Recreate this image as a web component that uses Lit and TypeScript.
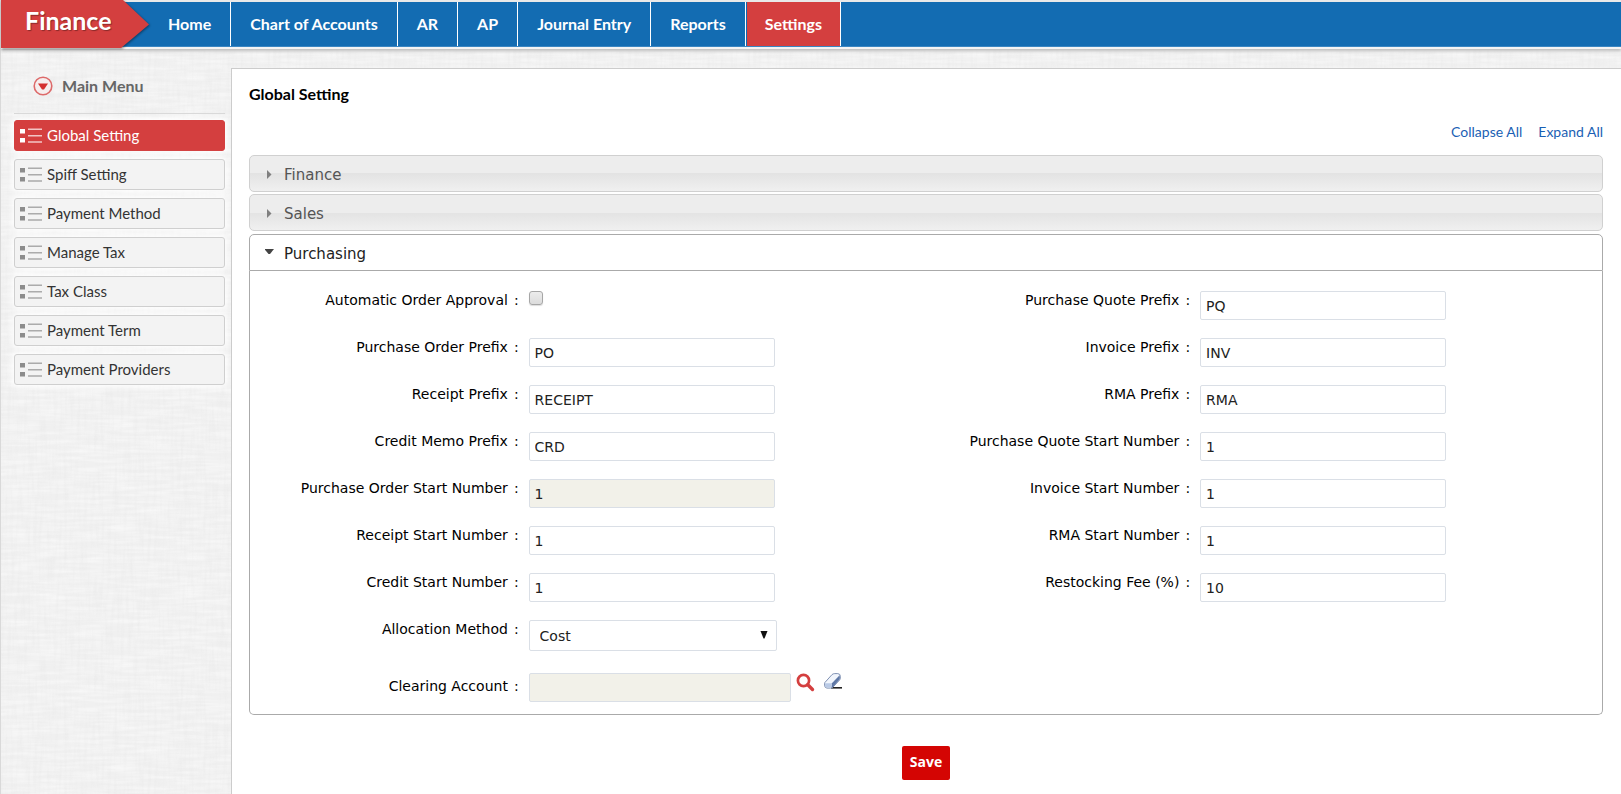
import { LitElement, html, css, svg, nothing } from "lit";
import { customElement, property, state } from "lit/decorators.js";
import { classMap } from "lit/directives/class-map.js";

interface Field {
  id: string;
  label: string;
  kind: "text" | "check" | "select" | "lookup";
  value?: string;
  locked?: boolean;
}

const NAV = ["Home", "Chart of Accounts", "AR", "AP", "Journal Entry", "Reports", "Settings"];

const MENU = [
  "Global Setting",
  "Spiff Setting",
  "Payment Method",
  "Manage Tax",
  "Tax Class",
  "Payment Term",
  "Payment Providers",
];

const LEFT: Field[] = [
  { id: "auto-approval", label: "Automatic Order Approval", kind: "check" },
  { id: "po-prefix", label: "Purchase Order Prefix", kind: "text", value: "PO" },
  { id: "receipt-prefix", label: "Receipt Prefix", kind: "text", value: "RECEIPT" },
  { id: "credit-prefix", label: "Credit Memo Prefix", kind: "text", value: "CRD" },
  { id: "po-start", label: "Purchase Order Start Number", kind: "text", value: "1", locked: true },
  { id: "receipt-start", label: "Receipt Start Number", kind: "text", value: "1" },
  { id: "credit-start", label: "Credit Start Number", kind: "text", value: "1" },
  { id: "allocation", label: "Allocation Method", kind: "select", value: "Cost" },
  { id: "clearing", label: "Clearing Account", kind: "lookup", value: "" },
];

const RIGHT: Field[] = [
  { id: "pq-prefix", label: "Purchase Quote Prefix", kind: "text", value: "PQ" },
  { id: "inv-prefix", label: "Invoice Prefix", kind: "text", value: "INV" },
  { id: "rma-prefix", label: "RMA Prefix", kind: "text", value: "RMA" },
  { id: "pq-start", label: "Purchase Quote Start Number", kind: "text", value: "1" },
  { id: "inv-start", label: "Invoice Start Number", kind: "text", value: "1" },
  { id: "rma-start", label: "RMA Start Number", kind: "text", value: "1" },
  { id: "restocking", label: "Restocking Fee (%)", kind: "text", value: "10" },
];

@customElement("setting-field")
class SettingField extends LitElement {
  @property({ attribute: false }) field!: Field;

  static styles = css`
    :host {
      display: block;
    }
    .row {
      display: grid;
      grid-template-columns: 2fr 3fr;
      column-gap: 10px;
      align-items: start;
      min-height: 29px;
    }
    .row.lookup {
      align-items: center;
    }
    .label {
      font-size: 14px;
      line-height: 18px;
      text-align: right;
      white-space: nowrap;
      color: #000;
    }
    .lookup .label {
      padding-bottom: 3px;
    }
    .colon {
      margin-left: 6px;
    }
    .text,
    .select {
      box-sizing: border-box;
      width: 246px;
      max-width: 100%;
      height: 29px;
      margin: 0;
      padding: 0 5px;
      border: 1px solid #dadfe6;
      border-radius: 2px;
      background: #fff;
      font-family: inherit;
      font-size: 14px;
      color: #222;
      display: block;
    }
    .text.locked {
      background: #f2f1e9;
    }
    .lookup .text {
      width: 262px;
    }
    .select-box {
      position: relative;
      width: 248px;
    }
    .select {
      appearance: none;
      width: 100%;
      height: 31px;
      padding: 0 10px;
    }
    .arrow {
      position: absolute;
      right: 9px;
      top: 11px;
      width: 8px;
      height: 8px;
      pointer-events: none;
    }
    .check {
      appearance: none;
      box-sizing: border-box;
      display: block;
      width: 14px;
      height: 14px;
      margin: 0;
      border: 1px solid #a6a6a6;
      border-radius: 3px;
      background: linear-gradient(#ececec, #dcdcdc);
      box-shadow: 0 1px 1px #ddd;
    }
    .with-icons {
      display: flex;
      align-items: flex-start;
    }
    .icon {
      border: 0;
      padding: 0;
      background: none;
      cursor: pointer;
      display: block;
      height: 18px;
    }
    .find {
      margin-left: 5px;
    }
    .erase {
      margin-left: 9px;
    }
    .glyph {
      display: block;
    }
  `;

  private control() {
    const f = this.field;
    if (f.kind === "check") return html`<input class="check" type="checkbox" id=${f.id} />`;
    if (f.kind === "select")
      return html`<div class="select-box">
        <select class="select" id=${f.id}>
          <option selected>Cost</option>
        </select>
        <svg class="arrow" viewBox="0 0 8 8"><path d="M.5 0h7L4.500 7.500h-1z" fill="#111" /></svg>
      </div>`;
    const box = html`<input
      class=${classMap({ text: true, locked: !!f.locked || f.kind === "lookup" })}
      type="text"
      id=${f.id}
      .value=${f.value ?? ""}
      ?readonly=${f.locked || f.kind === "lookup"}
    />`;
    if (f.kind !== "lookup") return box;
    return html`<div class="with-icons">
      ${box}
      <button class="icon find" type="button" aria-label="Find account">
        <svg class="glyph" width="19" height="19" viewBox="0 0 19 19" fill="none" stroke="#d43f3f">
          <circle cx="7.500" cy="7.500" r="5.600" stroke-width="2.700" />
          <path d="M11.800 11.800l4.700 4.700" stroke-width="3.400" stroke-linecap="round" />
        </svg>
      </button>
      <button class="icon erase" type="button" aria-label="Clear account">
        <svg class="glyph" width="18" height="18" viewBox="0 0 18 18">
          <path d="M7 14.800h11" stroke="#222" stroke-width="1.600" />
          <path d="M.8 9.600 8 1.600Q9.200.6 10.800.6h3q2.600.3 2.500 2.600v1.900q0 1-.8 2L9 14q-1 1.100-2.500 1.100H2.900Q.7 14.800.5 12.200z" fill="#f1f5fc" stroke="#7f90b2" />
          <path d="M7.900 10.300 15.600 2.200l.3 2.800q0 1-.8 2l-6 6.800q-.9.900-1.700.9z" fill="#5f78a6" />
          <path d="M1.200 10.200h5.300q1.500.1 1.300 1.700l-.6 2.600H3q-1.700-.1-2-2.300z" fill="#b9cae6" />
        </svg>
      </button>
    </div>`;
  }

  render() {
    const f = this.field;
    return html`<div class=${classMap({ row: true, lookup: f.kind === "lookup" })}>
      <label class="label" for=${f.id}>${f.label}<span class="colon">:</span></label>
      ${this.control()}
    </div>`;
  }
}

@customElement("app-root")
class AppRoot extends LitElement {
  @state() private open = new Set<string>(["Purchasing"]);

  static styles = css`
    :host {
      display: flex;
      flex-direction: column;
      box-sizing: border-box;
      min-height: 100vh;
      font-family: Lato, sans-serif;
      border-left: 1px solid #d9d9d9;
      background-color: #f0f0f0;
      background-image: url("data:image/svg+xml,%3Csvg xmlns='http://www.w3.org/2000/svg' width='240' height='240'%3E%3Cfilter id='a' x='0' y='0' width='100%25' height='100%25'%3E%3CfeTurbulence type='fractalNoise' baseFrequency='.03 .3' numOctaves='2' stitchTiles='stitch'/%3E%3CfeColorMatrix values='0 0 0 0 1 0 0 0 0 1 0 0 0 0 1 1 0 0 0 -.35'/%3E%3C/filter%3E%3Cfilter id='b' x='0' y='0' width='100%25' height='100%25'%3E%3CfeTurbulence type='fractalNoise' baseFrequency='.3 .03' numOctaves='2' stitchTiles='stitch'/%3E%3CfeColorMatrix values='0 0 0 0 .75 0 0 0 0 .75 0 0 0 0 .75 .5 0 0 0 -.2'/%3E%3C/filter%3E%3Crect width='240' height='240' filter='url(%23a)'/%3E%3Crect width='240' height='240' filter='url(%23b)'/%3E%3C/svg%3E");
    }
    .header {
      display: flex;
      height: 49px;
      background: linear-gradient(#e9e9e9 2px, #136cb2 2px, #136cb2 46px, #3a86c2 46px, #3a86c2 47px, #f4f4f4 47px);
      box-shadow: 0 2px 3px #bdbdbd;
    }
    .brand {
      position: relative;
      width: 148px;
      flex: none;
      box-sizing: border-box;
      padding-left: 24px;
      margin: 0;
      font-size: 25px;
      font-weight: 700;
      line-height: 40px;
      color: #fff;
      text-shadow: 1px 1px 1px rgba(0, 0, 0, 0.35);
    }
    .flag {
      position: absolute;
      left: 0;
      top: 0;
      filter: drop-shadow(1px 1px 1px rgba(0, 0, 0, 0.4));
    }
    .brand-text {
      position: relative;
    }
    .nav {
      display: flex;
      padding-top: 2px;
      height: 44px;
    }
    .nav-link {
      padding: 0 19px;
      border-right: 1px solid #fff;
      font-size: 16px;
      font-weight: 700;
      line-height: 44px;
      color: #fff;
      text-decoration: none;
      white-space: nowrap;
    }
    .nav-link.active {
      background: #d43f3f;
      margin-left: 1px;
      padding: 0 18px;
    }
    .body {
      display: flex;
      flex: 1;
      padding-top: 19px;
    }
    .side {
      width: 230px;
      flex: none;
      box-sizing: border-box;
      padding: 0 6px 0 13px;
    }
    .side-head {
      display: flex;
      align-items: center;
      gap: 9px;
      height: 35px;
      margin: 0 0 6px;
      padding: 0 0 10px 19px;
      border-bottom: 1px solid #d6d6d6;
      font-size: 16px;
      font-weight: 700;
      color: #666;
    }
    .menu {
      display: flex;
      flex-direction: column;
      gap: 8px;
      margin: 0;
      padding: 0;
      list-style: none;
    }
    .menu-link {
      display: flex;
      align-items: center;
      gap: 5px;
      height: 29px;
      padding-left: 5px;
      border: 1px solid #cfcfcf;
      border-radius: 3px;
      background: #f3f3f3;
      box-shadow: 0 0 6px 2px #fff;
      font-size: 15px;
      color: #333;
      text-decoration: none;
    }
    .menu-text {
      padding-bottom: 2px;
    }
    .menu-link.active {
      background: #d43f3f;
      border-color: #d43f3f;
      color: #fff;
    }
    .list-icon {
      flex: none;
      color: #8c8c8c;
    }
    .active .list-icon {
      color: #fff;
    }
    .main {
      flex: 1;
      min-width: 0;
      padding: 15px 18px 14px 17px;
      border: solid #ccc;
      border-width: 1px 0 0 1px;
      background: #fff;
    }
    .title {
      margin: 0;
      font-size: 16px;
      line-height: 20px;
      font-weight: 700;
      color: #000;
    }
    .tools {
      display: flex;
      justify-content: flex-end;
      gap: 16px;
      margin: 18px 0 13px;
      font-size: 14px;
      line-height: 20px;
    }
    .tool {
      border: 0;
      padding: 0;
      background: none;
      font: inherit;
      color: #1a5fb4;
      cursor: pointer;
    }
    .accordion {
      display: flex;
      flex-direction: column;
      gap: 2px;
      font-family: "DejaVu Sans", Verdana, sans-serif;
    }
    .bar-head {
      margin: 0;
      display: flex;
    }
    .bar {
      display: flex;
      align-items: center;
      gap: 10px;
      flex: 1;
      height: 37px;
      padding: 2px 15px 0;
      border: 1px solid #d0d0d0;
      border-radius: 5px;
      background: linear-gradient(#ededed 50%, #e3e3e3 50%, #f0f0f0);
      font: inherit;
      font-weight: 400;
      font-size: 15px;
      color: #555;
      text-align: left;
      cursor: pointer;
    }
    .open .bar {
      border-color: #aaa;
      border-radius: 5px 5px 0 0;
      background: #fff;
      color: #222;
    }
    .section.open {
      margin-top: 1px;
    }
    .panel {
      display: grid;
      grid-template-columns: 1fr 1fr;
      padding: 20px 5px 12px 4px;
      border: 1px solid #aaa;
      border-top: 0;
      border-radius: 0 0 5px 5px;
    }
    .column {
      display: flex;
      flex-direction: column;
      gap: 18px;
    }
    .last {
      margin-top: 4px;
    }
    .actions {
      display: flex;
      justify-content: center;
      margin-top: 31px;
    }
    .save {
      height: 34px;
      padding: 0 8px 3px;
      border: 0;
      border-radius: 2px;
      background: #d40503;
      font-family: "Open Sans", sans-serif;
      font-size: 14px;
      font-weight: 700;
      color: #fff;
      cursor: pointer;
    }
  `;

  private toggle(name: string) {
    const next = new Set(this.open);
    if (!next.delete(name)) next.add(name);
    this.open = next;
  }

  private section(name: string, content: unknown = nothing) {
    const open = this.open.has(name);
    return html`<section class=${classMap({ section: true, open })}>
      <h2 class="bar-head">
        <button class="bar" type="button" aria-expanded=${open} @click=${() => this.toggle(name)}>
          <svg width="9" height="10" viewBox="0 0 9 10">
            ${open
              ? svg`<path d="M-.5 0h9.500L5 5H3.500z" fill="#444" />`
              : svg`<path d="M2 0 6.500 4.500 2 9z" fill="#808080" />`}
          </svg>
          ${name}
        </button>
      </h2>
      ${open && content !== nothing ? html`<div class="panel">${content}</div>` : nothing}
    </section>`;
  }

  render() {
    const column = (fields: Field[]) => html`<div class="column">
      ${fields.map(
        (field) =>
          html`<setting-field class=${classMap({ last: field.kind === "lookup" })} .field=${field}></setting-field>`
      )}
    </div>`;
    return html`
      <header class="header">
        <h1 class="brand">
          <svg class="flag" width="152" height="48" viewBox="0 0 152 48">
            <path d="M0 0h122l26 24.500L120 48H0z" fill="#d43f3f" />
          </svg>
          <span class="brand-text">Finance</span>
        </h1>
        <nav class="nav">
          ${NAV.map(
            (n) => html`<a href="#" class=${classMap({ "nav-link": true, active: n === "Settings" })}>${n}</a>`
          )}
        </nav>
      </header>
      <div class="body">
        <aside class="side">
          <h2 class="side-head">
            <svg width="20" height="20" viewBox="0 0 20 20">
              <circle cx="10" cy="10" r="8.800" fill="#f6eeee" stroke="#dd6a6a" stroke-width="1.600" />
              <path d="M5 7.500h10L11 13.500H9z" fill="#d43030" />
            </svg>
            Main Menu
          </h2>
          <ul class="menu">
            ${MENU.map(
              (m, i) => html`<li>
                <a href="#" class=${classMap({ "menu-link": true, active: i === 0 })}>
                  <svg class="list-icon" width="22" height="15" viewBox="0 0 22 15" fill="currentColor">
                    <path d="M0 1h5v4.500H0zM0 10h5v4.500H0z" />
                    <path d="M8 .5h14v1.500H8zM8 7h14v1.500H8zM8 13.300h14v1.500H8z" opacity=".7" />
                  </svg>
                  <span class="menu-text">${m}</span>
                </a>
              </li>`
            )}
          </ul>
        </aside>
        <main class="main">
          <h2 class="title">Global Setting</h2>
          <div class="tools">
            <button class="tool" type="button" @click=${() => (this.open = new Set())}>Collapse All</button>
            <button
              class="tool"
              type="button"
              @click=${() => (this.open = new Set(["Finance", "Sales", "Purchasing"]))}
            >
              Expand All
            </button>
          </div>
          <div class="accordion">
            ${this.section("Finance")} ${this.section("Sales")}
            ${this.section("Purchasing", html`${column(LEFT)}${column(RIGHT)}`)}
          </div>
          <div class="actions"><button class="save" type="submit">Save</button></div>
        </main>
      </div>
    `;
  }
}
